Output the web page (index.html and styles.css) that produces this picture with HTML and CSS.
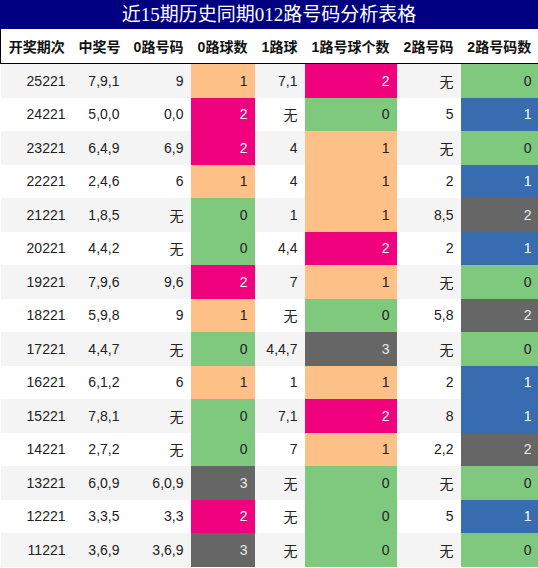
FILE: index.html
```html
<!DOCTYPE html>
<html lang="zh">
<head>
    <meta charset="UTF-8">
    <meta name="viewport" content="width=device-width, initial-scale=1.0">
    <title>近15期历史同期012路号码分析表格</title>
    <link rel="stylesheet" href="styles.css">
</head>
<body>

<div class="titulo">近15期历史同期012路号码分析表格</div>

<table class="tabla">
    <colgroup>
        <col style="width: 72px">
        <col style="width: 54px">
        <col style="width: 64px">
        <col style="width: 64px">
        <col style="width: 50px">
        <col style="width: 92px">
        <col style="width: 64px">
        <col style="width: 78px">
    </colgroup>
    <thead>
        <tr>
            <th>开奖期次</th>
            <th>中奖号</th>
            <th>0路号码</th>
            <th>0路球数</th>
            <th>1路球</th>
            <th>1路号球个数</th>
            <th>2路号码</th>
            <th>2路号码数</th>
        </tr>
    </thead>
    <tbody>
        <tr><td>25221</td><td>7,9,1</td><td>9</td><td class="peach">1</td><td>7,1</td><td class="pink">2</td><td>无</td><td class="green">0</td></tr>
        <tr><td>24221</td><td>5,0,0</td><td>0,0</td><td class="pink">2</td><td>无</td><td class="green">0</td><td>5</td><td class="blue">1</td></tr>
        <tr><td>23221</td><td>6,4,9</td><td>6,9</td><td class="pink">2</td><td>4</td><td class="peach">1</td><td>无</td><td class="green">0</td></tr>
        <tr><td>22221</td><td>2,4,6</td><td>6</td><td class="peach">1</td><td>4</td><td class="peach">1</td><td>2</td><td class="blue">1</td></tr>
        <tr><td>21221</td><td>1,8,5</td><td>无</td><td class="green">0</td><td>1</td><td class="peach">1</td><td>8,5</td><td class="grey">2</td></tr>
        <tr><td>20221</td><td>4,4,2</td><td>无</td><td class="green">0</td><td>4,4</td><td class="pink">2</td><td>2</td><td class="blue">1</td></tr>
        <tr><td>19221</td><td>7,9,6</td><td>9,6</td><td class="pink">2</td><td>7</td><td class="peach">1</td><td>无</td><td class="green">0</td></tr>
        <tr><td>18221</td><td>5,9,8</td><td>9</td><td class="peach">1</td><td>无</td><td class="green">0</td><td>5,8</td><td class="grey">2</td></tr>
        <tr><td>17221</td><td>4,4,7</td><td>无</td><td class="green">0</td><td>4,4,7</td><td class="grey">3</td><td>无</td><td class="green">0</td></tr>
        <tr><td>16221</td><td>6,1,2</td><td>6</td><td class="peach">1</td><td>1</td><td class="peach">1</td><td>2</td><td class="blue">1</td></tr>
        <tr><td>15221</td><td>7,8,1</td><td>无</td><td class="green">0</td><td>7,1</td><td class="pink">2</td><td>8</td><td class="blue">1</td></tr>
        <tr><td>14221</td><td>2,7,2</td><td>无</td><td class="green">0</td><td>7</td><td class="peach">1</td><td>2,2</td><td class="grey">2</td></tr>
        <tr><td>13221</td><td>6,0,9</td><td>6,0,9</td><td class="grey">3</td><td>无</td><td class="green">0</td><td>无</td><td class="green">0</td></tr>
        <tr><td>12221</td><td>3,3,5</td><td>3,3</td><td class="pink">2</td><td>无</td><td class="green">0</td><td>5</td><td class="blue">1</td></tr>
        <tr><td>11221</td><td>3,6,9</td><td>3,6,9</td><td class="grey">3</td><td>无</td><td class="green">0</td><td>无</td><td class="green">0</td></tr>
    </tbody>
</table>

</body>
</html>
```

FILE: styles.css
```css
/* Estilos generales */
body {
    margin: 0;
    padding: 0;
    background-color: #fff;
    font-family: 'Liberation Sans', 'Noto Sans CJK SC', sans-serif;
    color: #222;
}
/* Barra de titulo */
.titulo {
    height: 29px;
    line-height: 29px;
    background-color: #000080;
    color: #fff;
    text-align: center;
    font-family: 'Liberation Serif', 'Noto Sans CJK SC', serif;
    font-size: 19px;
}
/* Tabla */
.tabla {
    width: 538px;
    border-collapse: collapse;
    table-layout: fixed;
    font-size: 14px;
}
.tabla th {
    height: 34px;
    padding: 0;
    text-align: center;
    font-weight: bold;
    color: #111;
    border-bottom: 1px solid #000;
}
.tabla thead tr {
    border-left: 1px solid #000;
    border-right: 1px solid #000;
}
.tabla td {
    height: 33.5px;
    padding: 0 7px 0 0;
    text-align: right;
}
.tabla tbody tr:nth-child(odd) {
    background-color: #f4f4f4;
}
.tabla tbody tr:nth-child(even) {
    background-color: #fff;
}
/* Colores de celdas */
.tabla td.green { background-color: #7fc97f; }
.tabla td.peach { background-color: #fdc086; }
.tabla td.pink { background-color: #f0027f; color: #fff; }
.tabla td.blue { background-color: #386cb0; color: #fff; }
.tabla td.grey { background-color: #666666; color: #e8e8e8; }
```
